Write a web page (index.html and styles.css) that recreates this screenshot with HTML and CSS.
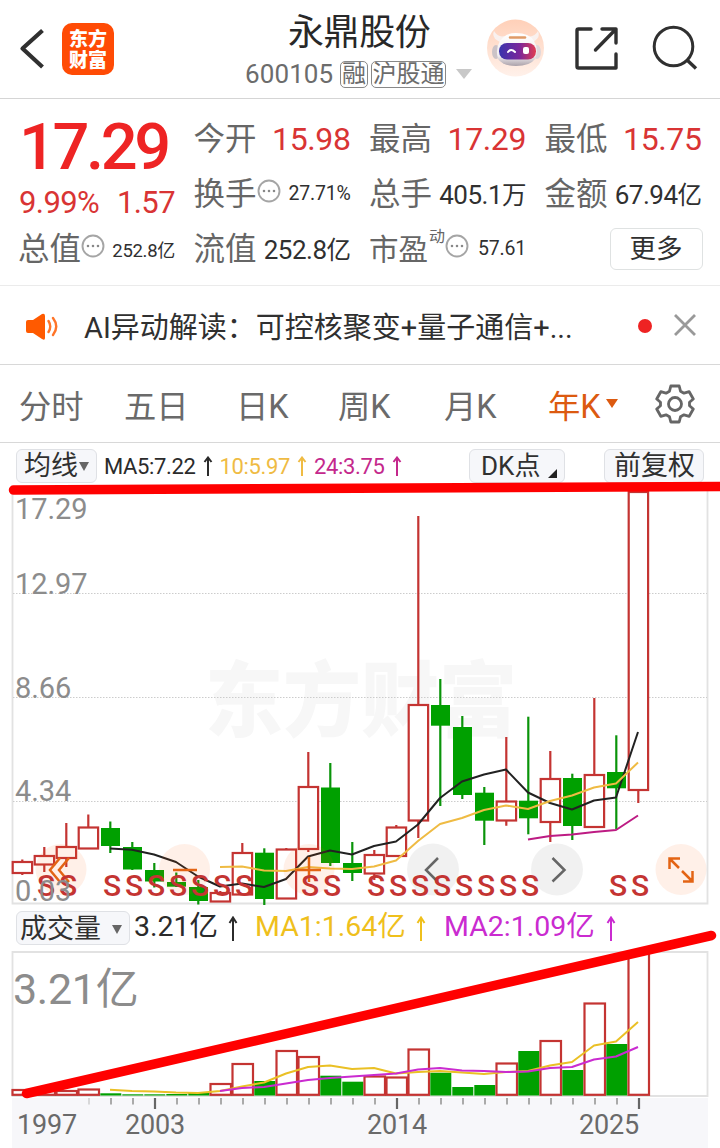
FILE: index.html
```html
<!DOCTYPE html>
<html lang="zh-CN">
<head>
<meta charset="utf-8">
<title>永鼎股份 600105</title>
<link rel="stylesheet" href="styles.css">
</head>
<body>
<main class="app">
  <header class="topbar">
    <div class="topbar-left">
      <svg class="back" width="26" height="42" viewBox="0 0 26 42"><path d="M24.500 2.500 4.500 20.500 24.500 39" fill="none" stroke="#303030" stroke-width="4.200" stroke-linejoin="round"/></svg>
      <div class="logo"><span>东方</span><span>财富</span></div>
    </div>
    <div class="stock">
      <h1 class="stock-name">永鼎股份</h1>
      <div class="stock-sub">
        <span class="code">600105</span><span class="tag">融</span><span class="tag tag-wide">沪股通</span><i class="caret"></i>
      </div>
    </div>
    <div class="topbar-right">
      <svg width="58" height="58" viewBox="0 0 58 58">
        <defs>
          <linearGradient id="halo" x1="0" y1="0" x2="0" y2="1"><stop offset="0" stop-color="#ffd0b8"/><stop offset="1" stop-color="#fff1ea"/></linearGradient>
          <linearGradient id="visor" x1="0" y1="0" x2="1" y2="0"><stop offset="0" stop-color="#3834ad"/><stop offset=".55" stop-color="#7a269b"/><stop offset="1" stop-color="#e13c52"/></linearGradient>
          <linearGradient id="shell" x1="0" y1="0" x2="0" y2="1"><stop offset="0" stop-color="#fff"/><stop offset=".7" stop-color="#f0ecef"/><stop offset="1" stop-color="#aaa1a9"/></linearGradient>
        </defs>
        <circle cx="28.500" cy="29" r="28.500" fill="url(#halo)"/>
        <path d="M13 23Q4 19 7 12Q11 19 18 17ZM46 23Q54 19 51 12Q47 19 40 17Z" fill="#f9f1ef"/>
        <ellipse cx="9" cy="33" rx="4" ry="7" fill="#cbc3c7"/><ellipse cx="50" cy="33" rx="4" ry="7" fill="#dfd7da"/>
        <path d="M13 22Q18 14 29 14Q42 14 47 22Q52 30 48 40Q43 47 29 47Q16 47 11 40Q8 30 13 22Z" fill="url(#shell)"/>
        <path d="M23 18.500H38" stroke="#df9a67" stroke-width="2.500" stroke-linecap="round"/>
        <rect x="12" y="24" width="37" height="16.500" rx="8" fill="url(#visor)"/>
        <path d="M21 33Q24 29 28 33" fill="none" stroke="#fff" stroke-width="2" stroke-linecap="round"/>
        <rect x="36" y="28" width="6" height="7" rx="2" fill="#fff"/>
      </svg>
      <svg class="share" width="46" height="46" viewBox="0 0 46 46"><path d="M17 4H4.500Q3 4 3 5.500V41.500Q3 43 4.500 43H42V29M28 4H42V18M42 4 21.500 25" fill="none" stroke="#303030" stroke-width="3.400" stroke-linecap="round" stroke-linejoin="round"/></svg>
      <svg class="search" width="46" height="46" viewBox="0 0 46 46"><circle cx="21.500" cy="21.500" r="19.300" fill="none" stroke="#303030" stroke-width="3"/><path d="m34.500 34.500 9.500 9" stroke="#303030" stroke-width="3.400"/></svg>
    </div>
  </header>

  <section class="quote">
    <div class="price">17.29</div>
    <div class="change"><span>9.99%</span><span>1.57</span></div>
    <div class="cell c2 r1"><b>今开</b><em class="up">15.98</em></div>
    <div class="cell c3 r1"><b>最高</b><em class="up">17.29</em></div>
    <div class="cell c4 r1"><b>最低</b><em class="up">15.75</em></div>
    <div class="cell c2 r2"><b>换手</b><svg class="dots" viewBox="0 0 24 24"><circle cx="12" cy="12" r="10.500"/><path d="M7 12h.01M12 12h.01M17 12h.01"/></svg><em class="small">27.71%</em></div>
    <div class="cell c3 r2"><b>总手</b><em>405.1<u>万</u></em></div>
    <div class="cell c4 r2"><b>金额</b><em>67.94<u>亿</u></em></div>
    <div class="cell c1 r3"><b>总值</b><svg class="dots" viewBox="0 0 24 24"><circle cx="12" cy="12" r="10.500"/><path d="M7 12h.01M12 12h.01M17 12h.01"/></svg><em class="small tight">252.8<u>亿</u></em></div>
    <div class="cell c2 r3"><b>流值</b><em>252.8<u>亿</u></em></div>
    <div class="cell c3 r3"><b class="pe">市盈</b><sup>动</sup><svg class="dots" viewBox="0 0 24 24"><circle cx="12" cy="12" r="10.500"/><path d="M7 12h.01M12 12h.01M17 12h.01"/></svg><em class="small">57.61</em></div>
    <button class="more c4 r3">更多</button>
  </section>

  <section class="news">
    <svg class="speaker" width="34" height="28" viewBox="0 0 34 28"><path d="M1 9Q1 7 3 7H8L17 1Q20 0 20 3V25Q20 28 17 26L8 20H3Q1 20 1 18Z" fill="#ff5a00"/><path d="M23.500 8Q27 13.500 23.500 19M28 5Q34.500 13.500 28 22" fill="none" stroke="#ff7428" stroke-width="2.400" stroke-linecap="round"/></svg>
    <p>AI异动解读：可控核聚变+量子通信+...</p>
    <i class="unread"></i>
    <svg width="24" height="24" viewBox="0 0 24 24"><path d="m2 2 20 20M22 2 2 22" stroke="#999" stroke-width="2.800"/></svg>
  </section>

  <nav class="tabs">
    <span>分时</span><span>五日</span><span>日K</span><span>周K</span><span>月K</span><span class="active">年K<i></i></span>
    <svg width="40" height="40" viewBox="0 0 40 40"><path d="M15.800 2H24.200L25.500 7.200L29 9.200L34.200 7.700L38.300 15L34.500 18.200V21.800L38.300 25L34.200 32.300L29 30.800L25.500 32.800L24.200 38H15.800L14.500 32.800L11 30.800L5.800 32.300L1.700 25L5.500 21.800V18.200L1.700 15L5.800 7.700L11 9.200L14.500 7.200Z" fill="none" stroke="#666" stroke-width="2.800" stroke-linejoin="round"/><circle cx="20" cy="20" r="6.500" fill="none" stroke="#666" stroke-width="2.800"/></svg>
  </nav>

  <section class="charts">
    <div class="ma-row">
      <span class="chip chip-ma">均线<i></i></span>
      <span class="ma ma5">MA5:7.22</span><svg class="arrow ma5" viewBox="0 0 10 20"><path d="M5 20V3M1.500 6 5 1.500 8.500 6"/></svg>
      <span class="ma ma10">10:5.97</span><svg class="arrow ma10" viewBox="0 0 10 20"><path d="M5 20V3M1.500 6 5 1.500 8.500 6"/></svg>
      <span class="ma ma24">24:3.75</span><svg class="arrow ma24" viewBox="0 0 10 20"><path d="M5 20V3M1.500 6 5 1.500 8.500 6"/></svg>
      <span class="chip chip-dk">DK点<i></i></span>
      <span class="chip chip-fq">前复权</span>
    </div>
    <svg id="price" class="plot" width="720" height="421" viewBox="0 484 720 421"></svg>
    <div class="vol-row">
      <span class="chip chip-vol">成交量<i></i></span>
      <span class="vol v0">3.21亿</span><svg class="arrow big v0" viewBox="0 0 10 25"><path d="M5 25V3M1.500 7 5 1.500 8.500 7"/></svg>
      <span class="vol v1">MA1:1.64亿</span><svg class="arrow big v1" viewBox="0 0 10 25"><path d="M5 25V3M1.500 7 5 1.500 8.500 7"/></svg>
      <span class="vol v2">MA2:1.09亿</span><svg class="arrow big v2" viewBox="0 0 10 25"><path d="M5 25V3M1.500 7 5 1.500 8.500 7"/></svg>
    </div>
    <svg id="volume" class="plot" width="720" height="197" viewBox="0 951 720 197"></svg>
    <svg class="marks" width="720" height="705" viewBox="0 443 720 705"><path d="M13.500 490 725 486.500" stroke-width="9.500"/><path d="M26.500 1093.500 711.500 935.500" stroke-width="9.500"/></svg>
  </section>
</main>
<script src="chart.js"></script>
</body>
</html>
```
FILE: styles.css
```css
* { box-sizing: border-box; }
body { margin: 0; background: #fff; font-family: Roboto, "Noto Sans CJK SC", sans-serif; font-weight: 400; color: #303030; }
.app { width: 720px; height: 1148px; overflow: hidden; }
i, em { font-style: normal; }
b { font-weight: inherit; }
u { text-decoration: none; }
svg { display: block; flex: none; }

.topbar { height: 99px; display: grid; grid-template-columns: 245px 228px 247px; border-bottom: 1px solid #d5d5d5; }
.topbar-left { display: flex; align-items: flex-start; padding: 23px 0 0 18px; }
.back { margin-top: 5px; }
.logo { margin-left: 18px; width: 52px; height: 52px; border-radius: 10px; background: #ff4b05; color: #fff; font: 900 19px/21px "Noto Sans CJK SC", sans-serif; display: flex; flex-direction: column; align-items: center; justify-content: center; padding-bottom: 2px; }
.stock-name { margin: 12px 0 0; padding-left: 43px; font-size: 36px; line-height: 42px; font-weight: inherit; letter-spacing: -.4px; white-space: nowrap; color: #282828; }
.stock-sub { display: flex; align-items: center; height: 28px; margin-top: 6px; color: #6c6c6c; }
.code { font-size: 26px; width: 95px; letter-spacing: .1px; }
.tag { height: 27px; width: 28px; border: 1.500px solid #888; border-radius: 5px; font-size: 24px; line-height: 24px; text-align: center; white-space: nowrap; display: flex; justify-content: center; }
.tag-wide { width: 75px; margin-left: 3px; }
.caret { margin-left: 10px; border: 8px solid transparent; border-top: 10px solid #c8c8c8; border-bottom: 0; }
.topbar-right { display: flex; padding: 19px 0 0 14px; }
.share { margin: 6px 0 0 29px; }
.search { margin: 6px 0 0 32px; }

.quote { height: 187px; padding: 12px 18px 0 19px; border-bottom: 1px solid #ebebeb; display: grid; grid-template-columns: repeat(4, 156px); grid-template-rows: repeat(3, 55px); column-gap: 19.500px; }
.price { grid-area: 1 / 1; font-size: 65px; line-height: 72px; font-weight: 500; letter-spacing: -3.400px; color: #ee2424; white-space: nowrap; }
.change { grid-area: 2 / 1; display: flex; justify-content: space-between; align-items: center; height: 38px; margin-top: 17px; font-size: 31px; letter-spacing: -.6px; color: #d93434; }
.c1 { grid-column: 1; } .c2 { grid-column: 2; } .c3 { grid-column: 3; } .c4 { grid-column: 4; }
.r1 { grid-row: 1; } .r2 { grid-row: 2; } .r3 { grid-row: 3; }
.cell { display: flex; align-items: center; height: 55px; white-space: nowrap; }
.cell b { font-size: 31.500px; color: #666; line-height: 54px; margin: 2px 0 0 -1px; }
.cell em { margin-left: auto; font-size: 26px; letter-spacing: -.5px; }
.cell em u { font-size: 24.500px; }
.cell em.up { font-size: 32px; color: #d93434; letter-spacing: -.4px; }
.cell em.small { font-size: 19.500px; letter-spacing: -.2px; }
.cell em.small u { font-size: 18px; }
.cell em.tight { font-size: 18.500px; letter-spacing: -.3px; }
.dots { width: 24px; height: 24px; margin-top: -5px; fill: none; stroke: #a5a5a5; stroke-width: 1.900; stroke-linecap: round; }
.dots path { stroke: #888; stroke-width: 2.600; }
.cell sup { font-size: 16px; line-height: 18px; margin: -24px 0 0 1px; color: #666; }
.cell b.pe { font-size: 29.500px; }
.more { width: 93px; height: 42px; margin: 7px 0 0 64px; padding: 0; border: 1.500px solid #dfe2e2; border-radius: 6px; background: #fff; font: 400 26.500px/36px Roboto, "Noto Sans CJK SC", sans-serif; color: #303030; }

.news { height: 79px; display: flex; align-items: center; padding: 0 23px 0 25px; border-bottom: 1px solid #d8d8d8; }
.speaker { margin-top: 3px; }
.news p { margin: 0 0 0 25px; width: 500px; font-size: 29px; letter-spacing: 0; white-space: nowrap; }
.unread { margin: 2px auto 0 54px; width: 14px; height: 14px; border-radius: 50%; background: #ee2323; }

.tabs { height: 78px; padding-left: 19px; display: grid; grid-template-columns: 105px 112px 102px 106px 104px 107px 46px; align-items: center; border-bottom: 1px solid #d8d8d8; font-size: 32.300px; color: #6a6a6a; }
.active { color: #dc5a10; display: flex; align-items: center; }
.active i { margin-left: 5px; border: 6px solid transparent; border-top: 9px solid #dc5a10; border-bottom: 0; }

.charts { position: relative; }
.ma-row { height: 41px; display: flex; align-items: center; padding: 5px 16px 0; }
.chip { height: 34px; border: 1.500px solid #dfe1e5; border-radius: 6px; background: #f6f7fa; font-size: 27px; line-height: 31px; display: flex; align-items: center; white-space: nowrap; flex: none; padding-top: 1px; }
.chip-ma { width: 81px; padding-left: 7px; }
.chip-ma i { margin-left: 1px; border: 5.500px solid transparent; border-top: 9px solid #666; border-bottom: 0; }
.chip-dk { width: 96px; margin-left: auto; padding-left: 11px; font-size: 26px; }
.chip-dk i { margin: 14px 0 0 8px; border-left: 9px solid transparent; border-bottom: 9px solid #222; }
.chip-fq { width: 100px; margin-left: 39px; padding-left: 9px; }
.ma { font-size: 22px; margin-left: 7px; letter-spacing: -.35px; white-space: nowrap; flex: none; }
.arrow { width: 10px; height: 20px; margin-left: 7px; fill: none; stroke: currentColor; stroke-width: 2; }
.ma5 { color: #2b2b2b; } .ma10 { color: #efbb43; } .ma24 { color: #c4288c; }
.vol-row { height: 46px; display: flex; align-items: center; padding: 0 16px; }
.chip-vol { width: 114px; padding: 3px 0 0 3px; font-size: 27px; }
.chip-vol i { margin-left: 11px; border: 5.500px solid transparent; border-top: 9px solid #666; border-bottom: 0; }
.vol { font-size: 28.500px; line-height: 42px; margin-top: -2px; white-space: nowrap; flex: none; }
.v0.vol { margin-left: 4px; width: 85px; } .v1.vol { margin-left: 17px; width: 152px; } .v2.vol { margin-left: 18px; width: 153px; }
.arrow.big { height: 25px; margin-left: 9px; }
.v0 { color: #2b2b2b; } .v1 { color: #efc01c; } .v2 { color: #ca2bd0; }
.marks { position: absolute; left: 0; top: 0; pointer-events: none; fill: none; stroke: #f00; stroke-linecap: round; }

.frame { fill: none; stroke: #e2e2e2; stroke-width: 1.800; }
.grid { stroke: #ccc; stroke-dasharray: 1.500 1.500; }
.watermark { font: 900 82px "Noto Sans CJK SC", sans-serif; fill: #f7f7f7; }
.rise { fill: none; stroke: #c43432; stroke-width: 2.200; }
.rise-body { fill: #fff; }
.fall { fill: #00a000; stroke: none; }
.fall-wick { fill: none; stroke: #0a940a; stroke-width: 2.200; }
.line { fill: none; stroke-width: 2; stroke-linejoin: round; }
.l-black { stroke: #222; } .l-gold { stroke: #efbb43; } .l-wine { stroke: #bd1b83; } .l-yellow { stroke: #eac025; } .l-pink { stroke: #ca2bd0; }
.axis { font-size: 29px; letter-spacing: -.1px; fill: #8c8c8c; }
.sell { font-size: 30px; font-weight: 500; fill: #c43432; text-anchor: middle; }
.peach { fill: #ff5a00; fill-opacity: .09; }
.gray { fill: #000; fill-opacity: .055; }
.orange { fill: none; stroke: #e36414; stroke-width: 2.500; }
.chev { fill: none; stroke: #666; stroke-width: 2.500; }
.total { font-size: 43px; letter-spacing: -.3px; fill: #8c8c8c; }
.years-bg { fill: #f7f7fa; }
.year { font-size: 27px; letter-spacing: -.2px; fill: #6a6a6a; }
.tick { stroke: #aaa; stroke-width: 2; }
.tick-major { stroke: #666; stroke-width: 2.200; }
```
FILE: chart.js
```js
// Yearly bars 1997-2025: direction, body top, body bottom, high, low
const candles = [
  ['r',862,873,859.5,875],['r',856,864.5,847,872],['r',847,858,823,867],['r',827.5,848.5,814.5,848.5],
  ['g',828,846,821.5,853],['g',847,869.5,842,870],['g',870,881.5,863,887.5],['g',882,886.7,872.5,887],
  ['g',887,901,880,904.5],['r',893,901.5,891,902],['r',853,894.5,843,894.5],['g',852.7,899,848.3,905],
  ['r',849.5,898.5,848,898.5],['r',787,849,752,852],['g',787.5,863,763,866],['g',863,873,842,881],
  ['r',855,873.5,850,880],['r',827.5,856,825,857],['r',705,820.5,516,838],['g',705,725.7,679,806],
  ['g',727,795,716,799],['g',792.7,820.7,787,845],['r',801.5,820.5,737,825.7],['g',800.7,818.3,716.7,834.3],
  ['r',779,822,751,842],['g',778,826,773.7,840],['r',775,827,698,827],['g',772,788.3,735.3,829.3],
  ['r',492,790,492,803]
];
const volumes = [1090,1091,1091,1089.5,1093.3,1094.3,1094.3,1094,1092,1084,1064,1081,1051,1057,1075.7,1081.7,1076.5,1077.5,1049.5,1072.7,1087,1085,1063.5,1051,1041,1070,1003.5,1044,953];
const cx = i => 22.3 + 22 * i;
const line = (first, ys, cls) =>
  `<polyline class="line ${cls}" points="${ys.map((y, k) => (22 + 22 * (first + k)) + ',' + y).join(' ')}"/>`;

let p = '<text class="watermark" x="205" y="730" textLength="312" lengthAdjust="spacingAndGlyphs">东方财富</text>';
p += '<path class="frame" d="M12.5 490V903.5H707.500V490"/>';
p += [593.5, 697.5, 801.5].map(y => `<path class="grid" d="M13 ${y}H707"/>`).join('');
candles.forEach(([d, top, bottom, high, low], i) => {
  const x = cx(i);
  if (d === 'r') {
    p += `<path class="rise" d="M${x} ${high}V${top}M${x} ${bottom}V${low}"/>`;
    p += `<rect class="rise rise-body" x="${x - 9.6}" y="${top}" width="19.400" height="${bottom - top}"/>`;
  } else {
    p += `<path class="fall-wick" d="M${x} ${high}V${low}"/>`;
    p += `<rect class="fall" x="${x - 9.3}" y="${top}" width="19" height="${bottom - top}"/>`;
  }
});
p += line(4, [848.5,849.7,854.5,862,876.5,886.5,883.5,887,879,856.5,850.5,854.5,846,841.5,824.5,798,781.5,774.5,769.5,792.5,803,809.5,800.5,797.5,732], 'l-black');
p += line(9, [867,866.5,870.5,871,867,868.5,869,866.5,860.5,841,824,818,810,805.5,809,801,795.5,787.5,783.5,762.5], 'l-gold');
p += line(23, [839.5,836,834.5,832,830,815.5], 'l-wine');
p += [61, 184.5, 309, 681].map(x => `<circle class="peach" cx="${x}" cy="869.500" r="25.500"/>`).join('');
p += [433, 557].map(x => `<circle class="gray" cx="${x}" cy="869.500" r="26"/>`).join('');
p += '<path class="orange" d="M60 858 50 870 60 882M69 858 59 870 69 882M173 870H197M295 870H321M309 857V882M669.500 869V858.500H680M670 859 679 868M683 881.500H692.500V871M692 881 682 871"/>';
p += '<path class="chev" d="M438 858 426 870 438 882M552.500 858 564.500 870 552.500 881.500"/>';
p += [46,68,112,134,156,178,200,222,244,310,332,376,398,420,442,464,486,508,530,618,640]
  .map(x => `<text class="sell" x="${x}" y="896">S</text>`).join('');
p += [['17.29',519],['12.97',594],['8.66',698],['4.34',801],['0.03',900.5]]
  .map(([t, y]) => `<text class="axis" x="15" y="${y}">${t}</text>`).join('');
document.getElementById('price').innerHTML = p;

let v = '<path class="frame" d="M12.500 952H707.500V1096H12.500Z"/><text class="total" x="13" y="1004">3.21亿</text>';
volumes.forEach((y, i) => {
  const x = cx(i);
  v += candles[i][0] === 'r'
    ? `<rect class="rise rise-body" x="${x - 9.8}" y="${y}" width="20.500" height="${1094.8 - y}"/>`
    : `<rect class="fall" x="${x - 10}" y="${y}" width="21" height="${1095.5 - y}"/>`;
});
v += line(4, [1089.7,1091,1091.5,1092.5,1093,1091,1086.5,1082.5,1073.5,1067,1065.5,1069,1068,1073.5,1072,1071,1072.5,1074,1072,1071,1065.5,1062,1045.5,1041.5,1022], 'l-yellow');
v += line(9, [1091,1088,1087,1083.5,1080,1078,1076.5,1075,1073.5,1069.5,1068,1070.5,1071,1072,1071.5,1068,1067,1059.5,1056.5,1047], 'l-pink');
v += '<rect class="years-bg" x="12" y="1098" width="696" height="50"/>';
for (let i = 3; i < 29; i++) {
  const major = i === 6 || i === 17 || i === 28;
  v += `<path class="${major ? 'tick-major' : 'tick'}" ${i === 3 ? 'opacity=".4"' : ''} d="M${23 + 22 * i} 1098V${major ? 1109 : 1104.5}"/>`;
}
v += [['1997',17],['2003',125],['2014',367],['2025',579]]
  .map(([t, x]) => `<text class="year" x="${x}" y="1134">${t}</text>`).join('');
document.getElementById('volume').innerHTML = v;
```
